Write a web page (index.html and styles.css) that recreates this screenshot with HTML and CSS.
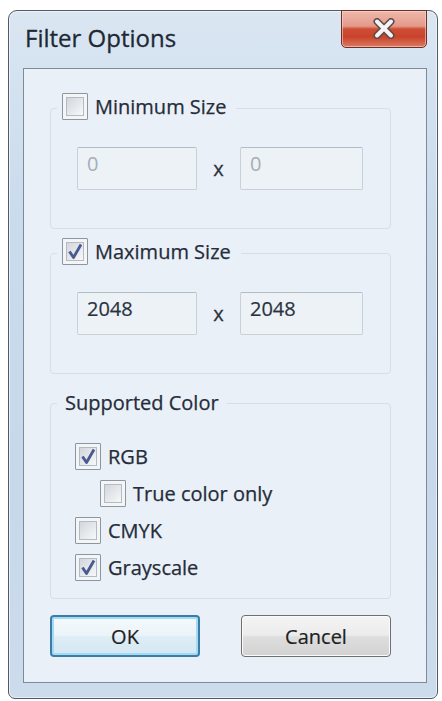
FILE: index.html
```html
<!DOCTYPE html>
<html>
<head>
<meta charset="utf-8">
<title>Filter Options</title>
<link rel="stylesheet" href="styles.css">
</head>
<body>
<div class="window">
  <div class="titlebar">
    <span class="title">Filter Options</span>
    <button class="close" aria-label="Close">
      <svg width="24" height="21" viewBox="0 0 24 21">
        <path d="M5 3.5 L19 17.5 M19 3.5 L5 17.5" stroke="#5b4a48" stroke-width="7" stroke-linecap="round" fill="none"/>
        <path d="M5 3.5 L19 17.5 M19 3.5 L5 17.5" stroke="#f4f4f4" stroke-width="4" stroke-linecap="round" fill="none"/>
      </svg>
    </button>
  </div>
  <div class="client">
    <fieldset class="group group-size">
      <legend class="legend-check">
        <span class="cb"><span class="cb-in"></span></span>
        <span class="lbl">Minimum Size</span>
      </legend>
      <div class="size-row">
        <div class="field field-w1 disabled">0</div>
        <span class="times">x</span>
        <div class="field field-w2 disabled">0</div>
      </div>
    </fieldset>

    <fieldset class="group group-size group-max">
      <legend class="legend-check">
        <span class="cb"><span class="cb-in"><svg class="tick" viewBox="0 0 18 19"><path d="M3.5 9.5 L7.5 15.5 L15 2.5" stroke="#4a5a90" stroke-width="2.8" fill="none" stroke-linejoin="round"/></svg></span></span>
        <span class="lbl">Maximum Size</span>
      </legend>
      <div class="size-row">
        <div class="field field-w1">2048</div>
        <span class="times">x</span>
        <div class="field field-w2">2048</div>
      </div>
    </fieldset>

    <fieldset class="group group-color">
      <legend class="legend-text">Supported Color</legend>
      <div class="options">
        <div class="opt">
          <span class="cb"><span class="cb-in"><svg class="tick" viewBox="0 0 18 19"><path d="M3.5 9.5 L7.5 15.5 L15 2.5" stroke="#4a5a90" stroke-width="2.8" fill="none" stroke-linejoin="round"/></svg></span></span>
          <span class="lbl">RGB</span>
        </div>
        <div class="opt indent">
          <span class="cb"><span class="cb-in"></span></span>
          <span class="lbl">True color only</span>
        </div>
        <div class="opt">
          <span class="cb"><span class="cb-in"></span></span>
          <span class="lbl">CMYK</span>
        </div>
        <div class="opt">
          <span class="cb"><span class="cb-in"><svg class="tick" viewBox="0 0 18 19"><path d="M3.5 9.5 L7.5 15.5 L15 2.5" stroke="#4a5a90" stroke-width="2.8" fill="none" stroke-linejoin="round"/></svg></span></span>
          <span class="lbl">Grayscale</span>
        </div>
      </div>
    </fieldset>

    <div class="buttons">
      <button class="btn btn-default">OK</button>
      <button class="btn">Cancel</button>
    </div>
  </div>
</div>
</body>
</html>
```

FILE: styles.css
```css
html, body {
  margin: 0;
  padding: 0;
  background: #ffffff;
}

body {
  font-family: "Open Sans", "Noto Sans", "Liberation Sans", sans-serif;
  color: #252c3a;
}

.window {
  margin: 10px 0 0 8px;
  width: 430px;
  box-sizing: border-box;
  border: 1px solid #4f5a66;
  border-radius: 9px 9px 7px 7px;
  background: linear-gradient(#dae6f2 0%, #cadbec 30%, #c6d8ea 70%, #cddcec 100%);
  box-shadow: inset 0 0 0 1px rgba(255, 255, 255, 0.55);
  padding: 0 10px 15px 14px;
  display: flex;
  flex-direction: column;
}

.titlebar {
  height: 57px;
  display: flex;
  justify-content: space-between;
  align-items: flex-start;
}

.title {
  margin: 11px 0 0 2px;
  font-size: 24px;
  line-height: 32px;
  color: #1f2935;
  -webkit-text-stroke: 0.3px #1f2935;
}

.close {
  margin-top: -1px;
  width: 86px;
  height: 38px;
  padding: 0 0 2px;
  box-sizing: border-box;
  border: 1px solid #6b3028;
  border-radius: 0 0 5px 5px;
  background: linear-gradient(#eeb8ab 0%, #e39a8a 42%, #cf4d35 50%, #c9432b 72%, #dc7a62 100%);
  box-shadow: inset 0 0 0 1px rgba(255, 220, 210, 0.55);
  display: flex;
  justify-content: center;
  align-items: center;
}

.close svg {
  display: block;
}

.client {
  height: 615px;
  box-sizing: border-box;
  border: 1px solid #7d8a97;
  background: #eaf0f7;
  padding: 24px 0 0 26px;
}

.group {
  margin: 0;
  width: 341px;
  box-sizing: border-box;
  border: 1px solid #d6dee8;
  border-radius: 4px;
  padding: 0 0 38px 6px;
  min-width: 0;
}

.group-max {
  margin-top: 9px;
}

.group-color {
  margin-top: 15px;
  padding-bottom: 17px;
}

.legend-check {
  display: flex;
  align-items: flex-start;
  gap: 7px;
  padding: 0 10px 3px 5px;
  font-size: 20px;
  line-height: 27px;
}

.legend-text {
  padding: 0 8px;
  font-size: 20px;
  line-height: 28px;
  color: #252c3a;
  -webkit-text-stroke: 0.25px #252c3a;
}

.cb {
  width: 26px;
  height: 27px;
  box-sizing: border-box;
  border: 1px solid #8d959e;
  border-radius: 1px;
  background: #f3f5f7;
  padding: 3px;
  flex: none;
}

.cb-in {
  display: block;
  width: 100%;
  height: 100%;
  box-sizing: border-box;
  border: 1px solid #b3bbc4;
  background: linear-gradient(135deg, #d2d7dd 0%, #e6e9ec 55%, #f7f8f9 100%);
}

.tick {
  display: block;
  width: 18px;
  height: 19px;
  margin: -1px 0 0 -1px;
}

.lbl {
  font-size: 20px;
  line-height: 27px;
  color: #252c3a;
  -webkit-text-stroke: 0.25px #252c3a;
}

.size-row {
  display: flex;
  align-items: center;
  margin: 24px 0 0 20px;
}

.field {
  height: 43px;
  box-sizing: border-box;
  border: 1px solid #c9d0d8;
  border-top-color: #b4bdc7;
  border-radius: 2px;
  background: #edf2f7;
  padding: 2px 9px 0;
  font-size: 20px;
  line-height: 28px;
  color: #2a3240;
  -webkit-text-stroke: 0.2px #2a3240;
}

.field-w1 {
  width: 120px;
}

.field-w2 {
  width: 123px;
}

.field.disabled {
  color: #a5adb6;
  -webkit-text-stroke: 0;
}

.times {
  width: 43px;
  text-align: center;
  font-size: 20px;
  line-height: 28px;
  color: #2a3240;
  -webkit-text-stroke: 0.3px #2a3240;
}

.options {
  margin: 26px 0 0 18px;
  display: flex;
  flex-direction: column;
  gap: 10px;
}

.opt {
  display: flex;
  align-items: flex-start;
  gap: 7px;
}

.opt.indent {
  margin-left: 25px;
}

.buttons {
  margin-top: 16px;
  display: flex;
  gap: 41px;
}

.btn {
  width: 150px;
  height: 42px;
  box-sizing: border-box;
  border: 1px solid #6f6f6f;
  border-radius: 4px;
  background: linear-gradient(#f4f4f4 0%, #ececec 48%, #dedede 52%, #d2d2d2 100%);
  box-shadow: inset 0 0 0 1px #fbfbfb;
  font-family: "Open Sans", "Noto Sans", sans-serif;
  font-size: 20px;
  color: #1e1e1e;
  -webkit-text-stroke: 0.2px #1e1e1e;
  padding: 0;
}

.btn-default {
  border: 2px solid #3a7ea8;
  box-shadow: inset 0 0 0 2px #a4daf2;
  background: linear-gradient(#f4f9fc 0%, #ebf4f9 48%, #dfedf5 52%, #d4e7f2 100%);
}
```
